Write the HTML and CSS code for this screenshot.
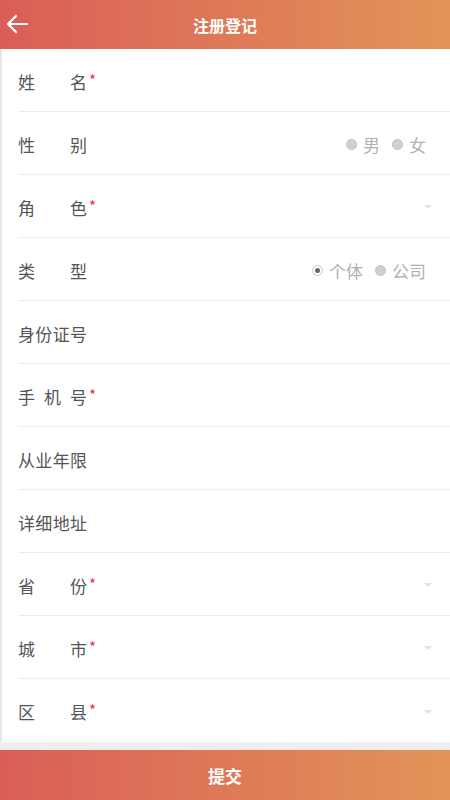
FILE: index.html
```html
<!DOCTYPE html>
<html lang="zh-CN">
<head>
    <meta charset="UTF-8">
    <meta name="viewport" content="width=device-width, initial-scale=1.0">
    <title>注册登记</title>
    <link rel="stylesheet" href="styles.css">
</head>
<body>
    <!-- Header -->
    <header class="topbar">
        <span class="back">
            <svg width="22" height="18" viewBox="0 0 22 18">
                <path d="M21 9H2M10 1L2 9l8 8" fill="none" stroke="#fff" stroke-width="2.2" stroke-linecap="round" stroke-linejoin="round"/>
            </svg>
        </span>
        <h1>注册登记</h1>
    </header>

    <!-- Form -->
    <form class="form">
        <div class="row">
            <label class="label">姓名</label><span class="req">*</span>
        </div>
        <div class="row">
            <label class="label">性别</label>
            <div class="radios">
                <span class="radio"><i class="dot"></i>男</span>
                <span class="radio"><i class="dot"></i>女</span>
            </div>
        </div>
        <div class="row">
            <label class="label">角色</label><span class="req">*</span>
            <span class="caret"></span>
        </div>
        <div class="row">
            <label class="label">类型</label>
            <div class="radios">
                <span class="radio"><i class="dot checked"></i>个体</span>
                <span class="radio"><i class="dot"></i>公司</span>
            </div>
        </div>
        <div class="row">
            <label class="label">身份证号</label>
        </div>
        <div class="row">
            <label class="label">手机号</label><span class="req">*</span>
        </div>
        <div class="row">
            <label class="label">从业年限</label>
        </div>
        <div class="row">
            <label class="label">详细地址</label>
        </div>
        <div class="row">
            <label class="label">省份</label><span class="req">*</span>
            <span class="caret"></span>
        </div>
        <div class="row">
            <label class="label">城市</label><span class="req">*</span>
            <span class="caret"></span>
        </div>
        <div class="row">
            <label class="label">区县</label><span class="req">*</span>
            <span class="caret"></span>
        </div>
    </form>

    <button class="submit" type="button">提交</button>
</body>
</html>
```

FILE: styles.css
```css
* {
    margin: 0;
    padding: 0;
    box-sizing: border-box;
}

body {
    font-family: "Noto Sans CJK SC", "Noto Sans", sans-serif;
    background-color: #eeeeee;
    width: 450px;
    height: 800px;
    overflow: hidden;
}

/* Header */
.topbar {
    height: 49px;
    background: linear-gradient(to right, #da5e57, #e29458);
    display: flex;
    align-items: center;
    justify-content: center;
    position: relative;
}

.topbar h1 {
    color: #fff;
    font-size: 16px;
    font-weight: bold;
}

.back {
    position: absolute;
    left: 6px;
    top: 15px;
    display: flex;
}

/* Form */
.form {
    background-color: #fff;
    border-left: 2px solid #e6e6e6;
}

.row {
    height: 63px;
    margin-left: 16px;
    padding-top: 2px;
    border-bottom: 1px solid #ececec;
    display: flex;
    align-items: center;
    padding-right: 24px;
    position: relative;
}

.row:last-child {
    border-bottom: none;
}

.label {
    width: 69px;
    font-size: 17px;
    color: #555;
    text-align: justify;
    text-align-last: justify;
}

.req {
    color: #e0393e;
    font-size: 15px;
    margin-left: 2px;
    margin-top: -4px;
}

.radios {
    margin-left: auto;
    display: flex;
    gap: 12px;
    font-size: 17px;
    color: #b0b0b0;
}

.radio {
    display: flex;
    align-items: center;
    gap: 6px;
}

.dot {
    width: 11px;
    height: 11px;
    border-radius: 50%;
    background-color: #d0d0d0;
    border: 1px solid #c2c2c2;
    display: inline-block;
}

.dot.checked {
    background-color: #fff;
    border: 1px solid #c8c8c8;
    position: relative;
}

.dot.checked::after {
    content: "";
    position: absolute;
    left: 2px;
    top: 2px;
    width: 5px;
    height: 5px;
    border-radius: 50%;
    background-color: #666;
}

.caret {
    margin-left: auto;
    margin-right: -6px;
    width: 0;
    height: 0;
    border-left: 4px solid transparent;
    border-right: 4px solid transparent;
    border-top: 4px solid #e2e2e2;
}

/* Submit */
.submit {
    position: fixed;
    left: 0;
    bottom: 0;
    width: 100%;
    height: 50px;
    border: none;
    background: linear-gradient(to right, #da5e57, #e29458);
    color: #fff;
    font-family: inherit;
    font-size: 17px;
    font-weight: bold;
}
```
